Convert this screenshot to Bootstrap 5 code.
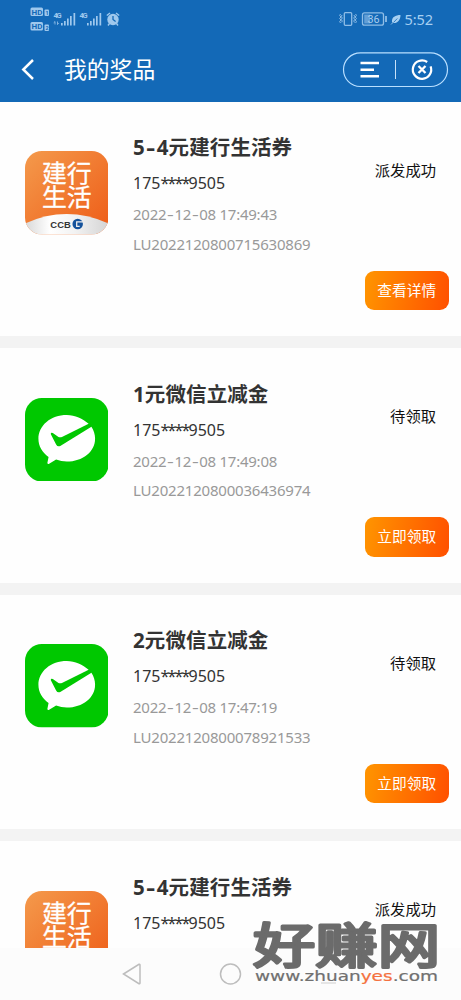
<!DOCTYPE html>
<html lang="zh-CN">
<head>
<meta charset="utf-8">
<meta name="viewport" content="width=device-width, initial-scale=1">
<title>我的奖品</title>
<link rel="stylesheet" href="https://cdn.jsdelivr.net/npm/bootstrap@5.3.0/dist/css/bootstrap.min.css">
<style>
body{font-family:"Noto Sans","Noto Sans CJK SC",sans-serif;background:#fff}
.screen{width:461px;height:1000px;background:#f3f3f3}
.top-area{height:101.5px;background:#1369b7}
.status-bar{height:38px}
.title-bar{height:61px}
.page-title{font-size:22.8px;line-height:30px;font-family:"Noto Sans CJK SC",sans-serif}
.prize{height:234.5px;margin-bottom:12px;background:#fefefe;padding-right:12.5px}
.app-icon{width:83.5px;height:83.5px;margin:49.5px 0 0 24.5px}
.info{padding:30.6px 0 0 25px}
.name{font:700 20.5px/31px "Noto Sans","Noto Sans CJK SC",sans-serif;color:#333;letter-spacing:.1px}
.wide-dash,.dash{display:inline-block;letter-spacing:0}
.wide-dash{padding:0 1.35px;transform:scaleX(1.35);margin:0 1.35px}
.dash{margin:0 1.6px;transform:scaleX(1.4)}
.phone{font-size:16px;line-height:24px;margin-top:8.4px;color:#333}
.stars{letter-spacing:-1.8px}
.meta{font-size:15px;line-height:22px;margin-top:8px;color:#999}
.date{letter-spacing:-.24px}
.code{letter-spacing:-.2px;margin-top:7.2px}
.state{font-size:15.3px;line-height:24px;margin:56.3px 12.5px 0 0;color:#111}
.go{width:83.5px;height:39.5px;margin-top:89.2px;border-radius:9px;background:linear-gradient(100deg,#ff9500,#ff5000);color:#fff;font-size:14.7px;line-height:39px}
.system-nav{height:52px;background:#fcfcfc}
.watermark{left:250px;top:915px}
</style>
</head>
<body>
<svg class="position-absolute" width="0" height="0">
<defs>
<linearGradient id="orange" x1="0" y1="0" x2="1" y2="1"><stop offset="0" stop-color="#f49a4c"/><stop offset="1" stop-color="#ee5b16"/></linearGradient>
<linearGradient id="silver"><stop offset="0" stop-color="#d8d8d8"/><stop offset=".3" stop-color="#fff"/><stop offset=".6" stop-color="#f2f2f2"/><stop offset="1" stop-color="#d4d4d4"/></linearGradient>
<clipPath id="tile"><rect width="84" height="84" rx="17"/></clipPath>
</defs>
<symbol id="ccb" viewBox="0 0 84 84">
<g clip-path="url(#tile)"><rect width="84" height="84" fill="url(#orange)"/>
<path d="M0 73Q42 54 84 73V84H0Z" fill="url(#silver)"/></g>
<g fill="#fff" stroke="#fff" stroke-width=".3" font-family="Noto Sans CJK SC" font-size="24.5"><text x="17" y="31.3" textLength="50" lengthAdjust="spacingAndGlyphs">建行</text><text x="17" y="55" textLength="50" lengthAdjust="spacingAndGlyphs">生活</text></g>
<text x="25.5" y="77" font-family="Liberation Sans" font-size="9.3" font-weight="700" fill="#333" textLength="20.5" lengthAdjust="spacingAndGlyphs">CCB</text>
<circle cx="53" cy="73.5" r="5.3" fill="#15539c"/><path d="M58.5 71.2H52v4.6h3" fill="none" stroke="#eee" stroke-width="1.3"/>
</symbol>
<symbol id="wechat" viewBox="0 0 84 84">
<rect width="84" height="84" rx="17" fill="#00c800"/>
<path d="M42 17C26 17 13.5 27.5 13.5 41c0 7.5 4 14 10.2 18.300L22.5 65.5q.3 1.3 1.800.6l7-4.200Q36.500 64 42 64C58 64 70.500 54 70.500 41c0-4.500-1.300-8.600-3.700-12.200L35.500 48.200q-2.700 1.400-4.200-1.500L26 36.500q-.4-2 2-1.200l5.700 3.900q1.500.8 3.500 0L64 26C58 20.500 50.500 17 42 17Z" fill="#fff"/>
</symbol>
</svg>
<main class="screen position-relative overflow-hidden">
<header class="top-area text-white">
<div class="status-bar d-flex justify-content-between">
<svg width="130" height="38" viewBox="0 0 130 38" fill="#9fc8ed" font-family="Roboto">
<g><rect x="30.500" y="7.500" width="12.500" height="8.500" rx="1.500"/><rect x="30.500" y="22" width="12.500" height="8.500" rx="1.500"/><rect x="44.500" y="9.500" width="4.500" height="6.500" rx="1"/><rect x="44.500" y="24.500" width="4.500" height="6.500" rx="1"/></g>
<g font-size="8" font-weight="700" fill="#1369b7"><text x="31.500" y="14.600">HD</text><text x="31.500" y="29.100">HD</text><text x="45.500" y="15" font-size="5.500">1</text><text x="45.500" y="30" font-size="5.500">2</text></g>
<g font-size="7.500" font-weight="700"><text x="53.500" y="18" textLength="8">4G</text><text x="79.500" y="18" textLength="8">4G</text></g>
<path d="M55 21.500v3m-1.300-1.700L55 21.500M57.500 21.500v3l1.300-1.300" stroke="#9fc8ed" fill="none" stroke-width=".8"/>
<path d="M61 23h1.700v2.500H61zM64 21h1.700v4.500H64zM67 18.500h1.700v7H67zM70 16h1.700v9.500H70zM73.500 13h1.700v12.500h-1.700zM87 23h1.700v2.500H87zM90 21h1.700v4.500H90zM93 18.500h1.700v7H93zM96 16h1.700v9.500H96zM99.500 13h1.700v12.500h-1.700z"/>
<circle cx="113" cy="19.500" r="5.700"/><path d="m106.800 15.500 3.200-2.500m6 0 3.200 2.500M109.500 23.500l-1.500 2m8.500-2 1.500 2" stroke="#9fc8ed" stroke-width="1.400"/><path d="M113 16v3.500l2.600 2" stroke="#1369b7" stroke-width="1.300" fill="none"/>
</svg>
<svg width="125" height="38" viewBox="336 0 125 38" fill="none" stroke="#8fbde6" font-family="Roboto">
<rect x="344.300" y="12.700" width="7.400" height="12.600" rx="1" stroke-width="1.300"/>
<path d="m340.500 14-.8 1.500 1.200 1.500-1.200 1.500 1.200 1.500-1.200 1.500.8 1.500M342 15l-.6 1.500.8 1.500-.8 1.500.8 1.500-.4 1.300M354 15l.6 1.500-.8 1.500.8 1.500-.8 1.500.6 1.500M355.600 14l.8 1.500-1.200 1.500 1.200 1.500-1.200 1.500 1.200 1.500-.8 1.500"/>
<rect x="362.500" y="12.900" width="21" height="12.300" rx="2" stroke-width="1.300"/><path d="M364.200 14.500h6v9h-6z" fill="#8fbde6" stroke="none" opacity=".65"/><path d="M386 16v6" stroke-width="1.800"/>
<text x="367.500" y="23" font-size="10.700" stroke="none" fill="#a7ccec">36</text>
<path d="M392 22c-.5-5 3.500-7 8.500-7 0 5-3 8.500-7.500 8" fill="#a7d0f2" stroke="none"/><path d="m393.500 22.500 3.800-4" stroke="#1369b7" stroke-width=".8"/><path d="m391 24.500 2-2"/>
<text x="404.500" y="24.700" font-family="Noto Sans" font-size="14.500" textLength="28.500" stroke="none" fill="#a7d0f2">5:52</text>
</svg>
</div>
<div class="title-bar d-flex align-items-center">
<svg width="64" height="63" viewBox="0 -1 64 63" fill="none" stroke="#fff" stroke-width="2.5"><path d="m33 22-9.700 9.500 9.700 9.500"/></svg>
<div class="page-title">我的奖品</div>
<svg class="ms-auto" width="120" height="63" viewBox="341 37 120 63" fill="none" stroke="#fff">
<rect x="343.500" y="52.800" width="104" height="33.700" rx="16.850" stroke="#b9dfff" stroke-width="1.200"/>
<path d="M360.500 63H379M360.500 69.700h13.500M360.500 76.300H379" stroke-width="2.500"/><path d="M395.500 60v19" stroke="#c7e1f8"/>
<path d="M427.200 62A9.200 9.200 0 1 0 430.600 66.300" stroke-width="2.200"/><path d="m418.500 66 7 7m0-7-7 7" stroke-width="2.300"/>
</svg>
</div>
</header>

<section class="prize d-flex">
<svg class="app-icon flex-shrink-0"><use href="#ccb"/></svg>
<div class="info"><div class="name">5<span class="wide-dash">-</span>4元建行生活券</div><div class="phone">175<span class="stars">****</span>9505</div><div class="meta date">2022<span class="dash">-</span>12<span class="dash">-</span>08 17:49:43</div><div class="meta code">LU2022120800715630869</div></div>
<div class="ms-auto d-flex flex-column align-items-end text-nowrap"><div class="state">派发成功</div><div class="go text-center">查看详情</div></div>
</section>
<section class="prize d-flex">
<svg class="app-icon flex-shrink-0"><use href="#wechat"/></svg>
<div class="info"><div class="name">1元微信立减金</div><div class="phone">175<span class="stars">****</span>9505</div><div class="meta date">2022<span class="dash">-</span>12<span class="dash">-</span>08 17:49:08</div><div class="meta code">LU2022120800036436974</div></div>
<div class="ms-auto d-flex flex-column align-items-end text-nowrap"><div class="state">待领取</div><div class="go text-center">立即领取</div></div>
</section>
<section class="prize d-flex">
<svg class="app-icon flex-shrink-0"><use href="#wechat"/></svg>
<div class="info"><div class="name">2元微信立减金</div><div class="phone">175<span class="stars">****</span>9505</div><div class="meta date">2022<span class="dash">-</span>12<span class="dash">-</span>08 17:47:19</div><div class="meta code">LU2022120800078921533</div></div>
<div class="ms-auto d-flex flex-column align-items-end text-nowrap"><div class="state">待领取</div><div class="go text-center">立即领取</div></div>
</section>
<section class="prize d-flex">
<svg class="app-icon flex-shrink-0"><use href="#ccb"/></svg>
<div class="info"><div class="name">5<span class="wide-dash">-</span>4元建行生活券</div><div class="phone">175<span class="stars">****</span>9505</div></div>
<div class="ms-auto d-flex flex-column align-items-end text-nowrap"><div class="state">派发成功</div></div>
</section>

<nav class="system-nav position-absolute bottom-0 start-0 w-100">
<svg width="461" height="52" viewBox="0 948 461 52" fill="none" stroke="#bdbdbd" stroke-width="1.500"><path d="m123.500 974 15.500-9.700q1-.3 1 .7v18q0 1-1 .7Z"/><circle cx="230.500" cy="974" r="10"/><path d="M321 983h15" stroke="#dedede"/></svg>
</nav>
<svg class="watermark position-absolute" width="195" height="80" viewBox="250 915 195 80">
<text x="253" y="963" font-family="Noto Sans CJK SC" font-size="48" font-weight="400" fill="#6b6b6b" stroke="#6b6b6b" stroke-width="3" stroke-linejoin="round" textLength="187" lengthAdjust="spacingAndGlyphs">好赚网</text>
<text x="255" y="981" font-family="DejaVu Sans" font-size="13.500" fill="#707070" stroke="#707070" stroke-width=".2" textLength="183" lengthAdjust="spacingAndGlyphs">www.zhuan<tspan fill="#f4713f" stroke="#f4713f">yes</tspan>.com</text>
</svg>
</main>
<script src="https://cdn.jsdelivr.net/npm/bootstrap@5.3.0/dist/js/bootstrap.bundle.min.js"></script>
</body>
</html>
